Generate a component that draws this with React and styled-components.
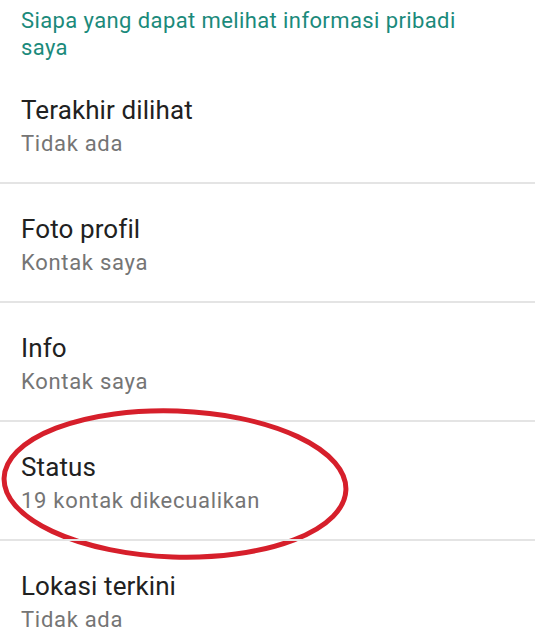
import React from "react";
import styled, { createGlobalStyle } from "styled-components";

const GlobalStyle = createGlobalStyle`
  html, body {
    margin: 0;
    padding: 0;
    background: #ffffff;
  }
  body {
    font-family: Roboto, "Noto Sans", "Liberation Sans", sans-serif;
    overflow: hidden;
  }
`;

const items = [
  { title: "Terakhir dilihat", value: "Tidak ada" },
  { title: "Foto profil", value: "Kontak saya" },
  { title: "Info", value: "Kontak saya" },
  { title: "Status", value: "19 kontak dikecualikan", marked: true },
  { title: "Lokasi terkini", value: "Tidak ada" },
];

export default function App() {
  return (
    <>
      <GlobalStyle />
      <Screen>
        <SectionHeader>Siapa yang dapat melihat informasi pribadi saya</SectionHeader>
        {items.map((item, i) => (
          <Row key={item.title} $first={i === 0}>
            <Title>{item.title}</Title>
            <Value>{item.value}</Value>
            {item.marked && <Circle />}
          </Row>
        ))}
      </Screen>
    </>
  );
}

function Circle() {
  return (
    <Marker viewBox="0 0 360 160" width="360" height="160">
      <ellipse
        cx="175"
        cy="79"
        rx="171"
        ry="73"
        transform="rotate(2 175 79)"
        fill="none"
        stroke="#d61f2b"
        strokeWidth="5"
      />
    </Marker>
  );
}

const Screen = styled.div`
  width: 535px;
  height: 640px;
  background: #fff;
  overflow: hidden;
`;

const SectionHeader = styled.div`
  box-sizing: border-box;
  max-width: 490px;
  padding: 7px 21px 4px;
  font-size: 22px;
  line-height: 27px;
  letter-spacing: 0.4px;
  color: #1b8a7b;
`;

const Row = styled.div`
  position: relative;
  padding: 29px 21px 24px;
  border-top: ${(p) => (p.$first ? "none" : "2px solid #e4e4e4")};
  margin-top: ${(p) => (p.$first ? "0" : "-1px")};
`;

const Title = styled.div`
  font-size: 26px;
  line-height: 32px;
  letter-spacing: 0.1px;
  color: #212121;
`;

const Value = styled.div`
  margin-top: 3px;
  font-size: 22px;
  line-height: 30px;
  letter-spacing: 0.7px;
  color: #757575;
`;

const Marker = styled.svg`
  position: absolute;
  left: 0;
  top: -17px;
  pointer-events: none;
`;
